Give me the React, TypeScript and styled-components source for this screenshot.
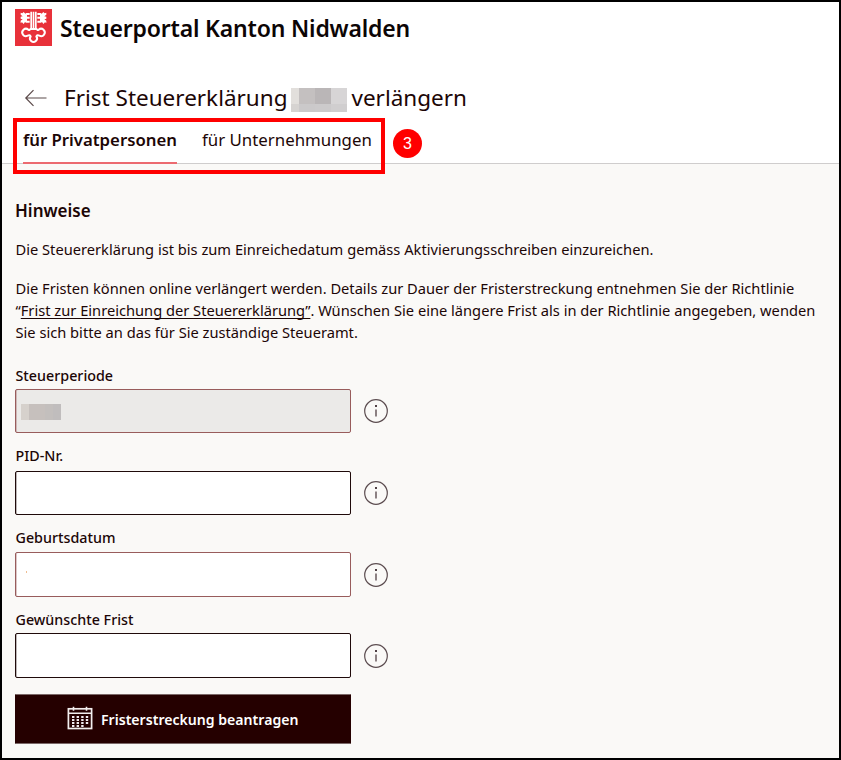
import React from 'react';
import styled, { createGlobalStyle } from 'styled-components';

const GlobalStyle = createGlobalStyle`
  * { box-sizing: border-box; }
  html, body { margin: 0; padding: 0; background: #fff; }
  body { font-family: 'Noto Sans', 'Open Sans', sans-serif; color: #1c0606; }
`;

const Frame = styled.div`
  position: relative;
  width: 841px;
  height: 760px;
  border: 2px solid #000;
  background: #faf9f7;
  overflow: hidden;
  display: flex;
  flex-direction: column;
`;

const Header = styled.header`
  display: flex;
  align-items: center;
  gap: 8px;
  height: 50px;
  padding-left: 13px;
  background: #fff;
`;

const Logo = styled.svg`
  width: 37px;
  height: 37px;
  flex: none;
`;

const SiteTitle = styled.div`
  padding-top: 2px;
  font-size: 23px;
  line-height: 32px;
  font-weight: 600;
  letter-spacing: -0.18px;
  white-space: nowrap;
  color: #0c0505;
`;

const PageHead = styled.div`
  display: flex;
  align-items: center;
  height: 66px;
  padding: 26px 0 0 22px;
  background: #fff;
`;

const BackArrow = styled.svg`
  width: 24px;
  height: 20px;
  margin-right: 16px;
`;

const PageTitle = styled.h1`
  display: flex;
  align-items: center;
  margin: 0;
  font-size: 22.5px;
  line-height: 38px;
  font-weight: 400;
  white-space: nowrap;
`;

const Mosaic = styled.span<{ $columns: string; $rows: string }>`
  display: inline-grid;
  grid-template-columns: ${(p) => p.$columns};
  grid-template-rows: ${(p) => p.$rows};
`;

const HeadMosaic = styled(Mosaic)`
  margin: 4px 5px 0 3px;
`;

const Cell = styled.span<{ $color: string }>`
  background: ${(p) => p.$color};
`;

const TabBar = styled.nav`
  display: flex;
  gap: 25px;
  height: 46px;
  padding-left: 21px;
  background: #fff;
  border-bottom: 1px solid #cfcdcd;
`;

const Tab = styled.a<{ $active?: boolean }>`
  height: 46px;
  font-size: ${(p) => (p.$active ? '16.75px' : '16.85px')};
  line-height: 43px;
  font-weight: ${(p) => (p.$active ? 600 : 400)};
  white-space: nowrap;
  border-bottom: ${(p) => (p.$active ? '2px solid #ec6a70' : 'none')};
`;

const Highlight = styled.div`
  position: absolute;
  left: 11px;
  top: 116px;
  width: 372px;
  height: 56px;
  border: 4px solid #f00;
`;

const StepBadge = styled.div`
  position: absolute;
  left: 391px;
  top: 127px;
  width: 29px;
  height: 29px;
  border-radius: 50%;
  background: #f00;
  color: #fff;
  font: 16px/29px 'Liberation Sans', Arial, sans-serif;
  text-align: center;
`;

const Content = styled.main`
  display: flex;
  flex-direction: column;
  align-items: flex-start;
  padding: 36px 0 0 13px;
`;

const SectionTitle = styled.h2`
  margin: 0 0 17px;
  font-size: 17px;
  line-height: 21px;
  font-weight: 600;
`;

const Paragraph = styled.p<{ $gap: number }>`
  margin: 0 0 ${(p) => p.$gap}px;
  padding-left: 0.5px;
  font-size: 14.67px;
  line-height: 22px;
  white-space: nowrap;
`;

const GuideLink = styled.a`
  text-decoration: underline;
  text-decoration-thickness: 1px;
  text-underline-offset: 2px;
  text-decoration-skip-ink: none;
`;

const Field = styled.div<{ $gap: number; $labelGap: number }>`
  display: flex;
  flex-direction: column;
  gap: ${(p) => p.$labelGap}px;
  margin-bottom: ${(p) => p.$gap}px;
`;

const Label = styled.label`
  padding-left: 0.5px;
  font-size: 14.3px;
  line-height: 20px;
  font-weight: 500;
`;

const Control = styled.div`
  display: flex;
  align-items: center;
  gap: 13px;
`;

const Input = styled.div<{ $height: number; $soft?: boolean; $disabled?: boolean }>`
  display: flex;
  align-items: center;
  width: 336px;
  height: ${(p) => p.$height}px;
  padding-left: 5px;
  border: 1px solid ${(p) => (p.$soft ? '#985c5c' : '#1f0a0a')};
  border-radius: 2px;
  background: ${(p) => (p.$disabled ? '#ebeae8' : '#fff')};
  box-shadow: inset 1px 0 0 ${(p) => (p.$soft ? 'rgba(152,92,92,.35)' : 'rgba(31,10,10,.3)')};
`;

const FieldMosaic = styled(Mosaic)`
  margin-top: 1px;
`;

const Dot = styled.span`
  width: 1px;
  height: 2px;
  margin: -6px 0 0 5px;
  background: #f0bd90;
`;

const InfoSvg = styled.svg`
  width: 24px;
  height: 24px;
`;

const Submit = styled.button`
  display: flex;
  align-items: center;
  gap: 8px;
  width: 336px;
  height: 50px;
  padding: 0 0 0 51px;
  border: 1px solid #7b6868;
  border-left-color: #250000;
  border-right-color: #250000;
  border-radius: 1px;
  background: #250000;
  background-clip: padding-box;
  color: #fff;
  font: 600 14.1px/20px 'Noto Sans', 'Open Sans', sans-serif;
`;

const SubmitText = styled.span`
  padding-top: 2px;
  white-space: nowrap;
`;

const CalendarSvg = styled.svg`
  width: 26px;
  height: 24px;
  margin-top: -2px;
`;

function KeyLogo() {
  return (
    <Logo viewBox="0 0 111 111">
      <rect width="111" height="111" fill="#e8313a" />
      <g fill="#fff">
        <path d="M46 8h5v50h-5zM53 8h5v50h-5zM60 8h5v50h-5z" />
        <path d="M44 29H36v6l8 0v6H33l-3-2-4 6-5-5-4 2v-7l6-4-6-2v-6l6-1-6-5v-6l5 2 4-4 5 5 3-2h10v6h-8v5h8z" />
        <path d="M67 29h8v6l-8 0v6h11l3-2 4 6 5-5 4 2v-7l-6-4 6-2v-6l-6-1 6-5v-6l-5 2-4-4-5 5-3-2H67v6h8v5h-8z" />
      </g>
      <path
        d="M46 60Q44 65 40 62A11 11 0 1 0 38 80Q44 76 47 82A10.5 10.5 0 1 0 64 82Q67 76 73 80A11 11 0 1 0 71 62Q67 65 65 60Z"
        fill="none"
        stroke="#fff"
        strokeWidth="6"
        strokeLinejoin="round"
      />
    </Logo>
  );
}

function InfoIcon() {
  return (
    <InfoSvg viewBox="0 0 24 24" fill="none" stroke="#5c4d50">
      <circle cx="12" cy="12" r="11.3" strokeWidth="1.2" />
      <path d="M12 10.5v7" strokeWidth="1.4" />
      <path d="M12 6v2" strokeWidth="1.8" stroke="#3c2c30" />
    </InfoSvg>
  );
}

function CalendarIcon() {
  const dots: [number, number][] = [];
  for (let r = 0; r < 4; r++) {
    for (let c = 0; c < 4; c++) {
      if (r === 3 && c === 3) continue;
      dots.push([5 + c * 4.6, 10 + r * 3]);
    }
  }
  return (
    <CalendarSvg viewBox="0 0 26 24">
      <rect x="1.4" y="2.8" width="23.2" height="19.7" fill="none" stroke="#f2eeee" strokeWidth="1.7" />
      <path d="M1.4 7.2h23.2M6.5.8v4M19.5.8v4" stroke="#f2eeee" strokeWidth="1.6" />
      {dots.map(([x, y]) => (
        <rect key={`${x}-${y}`} x={x} y={y} width="2.4" height="2" fill="#f0eaee" />
      ))}
    </CalendarSvg>
  );
}

const headCells = ['#e2dfdc', '#c4c0c0', '#bab6b7', '#d7d5d6', '#d6d3d1', '#cbc9ca', '#cccacb', '#d0cecf'];
const fieldCells = ['#d6d1cc', '#c6c0bd', '#c3bfbd', '#c0bdbd'];

type FieldSpec = {
  label: string;
  height: number;
  labelGap: number;
  gap: number;
  soft?: boolean;
  disabled?: boolean;
  dot?: boolean;
};

const fields: FieldSpec[] = [
  { label: 'Steuerperiode', height: 44, labelGap: 3, gap: 13, soft: true, disabled: true },
  { label: 'PID-Nr.', height: 44, labelGap: 5, gap: 13 },
  { label: 'Geburtsdatum', height: 45, labelGap: 4, gap: 13, soft: true, dot: true },
  { label: 'Gewünschte Frist', height: 45, labelGap: 3, gap: 16 },
];

export default function App() {
  return (
    <>
      <GlobalStyle />
      <Frame>
        <Header>
          <KeyLogo />
          <SiteTitle>Steuerportal Kanton Nidwalden</SiteTitle>
        </Header>
        <PageHead>
          <BackArrow viewBox="0 0 24 20" fill="none" stroke="#5b4a4a" strokeWidth="1.2">
            <path d="M22.5 10H2M9.5 2.2L1.8 10l7.7 7.8" />
          </BackArrow>
          <PageTitle>
            <span>Frist Steuererklärung</span>
            <HeadMosaic $columns="8px 16px 16px 16px" $rows="16px 8px">
              {headCells.map((c, i) => <Cell key={i} $color={c} />)}
            </HeadMosaic>
            <span>verlängern</span>
          </PageTitle>
        </PageHead>
        <TabBar>
          <Tab $active>für Privatpersonen</Tab>
          <Tab>für Unternehmungen</Tab>
        </TabBar>
        <Content>
          <SectionTitle>Hinweise</SectionTitle>
          <Paragraph $gap={17}>
            Die Steuererklärung ist bis zum Einreichedatum gemäss Aktivierungsschreiben einzureichen.
          </Paragraph>
          <Paragraph $gap={23}>
            Die Fristen können online verlängert werden. Details zur Dauer der Fristerstreckung entnehmen Sie der Richtlinie
            <br />
            “<GuideLink>Frist zur Einreichung der Steuererklärung”</GuideLink>. Wünschen Sie eine längere Frist als in der
            Richtlinie angegeben, wenden
            <br />
            Sie sich bitte an das für Sie zuständige Steueramt.
          </Paragraph>
          {fields.map((f) => (
            <Field key={f.label} $gap={f.gap} $labelGap={f.labelGap}>
              <Label>{f.label}</Label>
              <Control>
                <Input $height={f.height} $soft={f.soft} $disabled={f.disabled}>
                  {f.disabled && (
                    <FieldMosaic $columns="8px 16px 8px 8px" $rows="16px">
                      {fieldCells.map((c, i) => <Cell key={i} $color={c} />)}
                    </FieldMosaic>
                  )}
                  {f.dot && <Dot />}
                </Input>
                <InfoIcon />
              </Control>
            </Field>
          ))}
          <Submit>
            <CalendarIcon />
            <SubmitText>Fristerstreckung beantragen</SubmitText>
          </Submit>
        </Content>
        <Highlight />
        <StepBadge>3</StepBadge>
      </Frame>
    </>
  );
}
